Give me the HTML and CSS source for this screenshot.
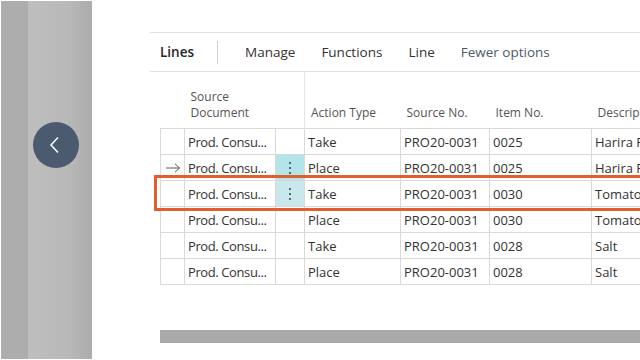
FILE: index.html
```html
<!DOCTYPE html>
<html>
    <head>
        <title>Lines</title>
        <link rel="stylesheet" href="styles.css">
    </head>
    <body>
        <!-- Collapsed side panel -->
        <div class="strip">
            <div class="strip-dark"></div>
            <div class="strip-light">
                <div class="back-btn">
                    <svg width="12" height="18" viewBox="0 0 12 18">
                        <polyline points="9,1.5 2,9 9,16.5" fill="none" stroke="#ffffff" stroke-width="1.5"/>
                    </svg>
                </div>
            </div>
        </div>

        <!-- Lines part -->
        <div class="main">
            <div class="toolbar">
                <span class="tab-title">Lines</span>
                <span class="sep"></span>
                <span class="action">Manage</span>
                <span class="action">Functions</span>
                <span class="action">Line</span>
                <span class="action muted">Fewer options</span>
            </div>

            <div class="grid-wrap">
                <table class="lines">
                    <colgroup>
                        <col class="c-ind"><col class="c-doc"><col class="c-dots"><col class="c-act">
                        <col class="c-src"><col class="c-item"><col class="c-desc">
                    </colgroup>
                    <thead>
                        <tr>
                            <th></th>
                            <th class="two">Source<br>Document</th>
                            <th class="frozen"></th>
                            <th>Action Type</th>
                            <th>Source No.</th>
                            <th>Item No.</th>
                            <th>Description</th>
                        </tr>
                    </thead>
                    <tbody>
                        <tr>
                            <td></td><td class="doc">Prod. Consu...</td><td></td><td>Take</td>
                            <td>PRO20-0031</td><td>0025</td><td>Harira Paste</td>
                        </tr>
                        <tr>
                            <td class="ind"><svg width="16" height="10" viewBox="0 0 16 10"><path d="M1 5 H14.5 M10 0.8 L14.5 5 L10 9.2" fill="none" stroke="#555" stroke-width="1"/></svg></td>
                            <td class="doc">Prod. Consu...</td>
                            <td class="dots on"><svg width="4" height="14" viewBox="0 0 4 14"><circle cx="2" cy="2" r="1" fill="#3a3a3a"/><circle cx="2" cy="7" r="1" fill="#3a3a3a"/><circle cx="2" cy="12" r="1" fill="#3a3a3a"/></svg></td>
                            <td>Place</td><td>PRO20-0031</td><td>0025</td><td>Harira Paste</td>
                        </tr>
                        <tr>
                            <td></td><td class="doc">Prod. Consu...</td>
                            <td class="dots soft"><svg width="4" height="14" viewBox="0 0 4 14"><circle cx="2" cy="2" r="1" fill="#3a3a3a"/><circle cx="2" cy="7" r="1" fill="#3a3a3a"/><circle cx="2" cy="12" r="1" fill="#3a3a3a"/></svg></td>
                            <td>Take</td><td>PRO20-0031</td><td>0030</td><td>Tomato Paste</td>
                        </tr>
                        <tr>
                            <td></td><td class="doc">Prod. Consu...</td><td></td><td>Place</td>
                            <td>PRO20-0031</td><td>0030</td><td>Tomato Paste</td>
                        </tr>
                        <tr>
                            <td></td><td class="doc">Prod. Consu...</td><td></td><td>Take</td>
                            <td>PRO20-0031</td><td>0028</td><td>Salt</td>
                        </tr>
                        <tr>
                            <td></td><td class="doc">Prod. Consu...</td><td></td><td>Place</td>
                            <td>PRO20-0031</td><td>0028</td><td>Salt</td>
                        </tr>
                    </tbody>
                </table>
                <div class="highlight"></div>
            </div>

            <div class="hscroll"></div>
        </div>
    </body>
</html>
```

FILE: styles.css
```css
html, body {
    margin: 0;
    height: 100%;
    overflow: hidden;
}
body {
    display: flex;
    background-color: #ffffff;
    font-family: "Open Sans", "Noto Sans", sans-serif;
    color: #333333;
}
.strip {
    display: flex;
    width: 91px;
    flex-shrink: 0;
    margin: 1px 0 1px 1px;
}
.strip-dark {
    width: 27px;
    background-color: #adadad;
}
.strip-light {
    flex: 1;
    background: linear-gradient(to right, #bebebe, #b9b9b9 60%, #acacac);
    position: relative;
}
.back-btn {
    position: absolute;
    left: 5px;
    top: 121px;
    width: 46px;
    height: 46px;
    border-radius: 50%;
    background-color: #4b5a6f;
    display: flex;
    align-items: center;
    justify-content: center;
}
.back-btn svg {
    margin-left: -2px;
}
.main {
    flex: 1;
    padding-top: 32px;
    min-width: 0;
}
.toolbar {
    margin-left: 58px;
    padding-left: 10px;
    height: 38px;
    border-top: 1px solid #e2e2e2;
    border-bottom: 1px solid #e2e2e2;
    display: flex;
    align-items: center;
    font-size: 14px;
    white-space: nowrap;
}
.tab-title {
    font-weight: 600;
    font-size: 13.5px;
    color: #262626;
}
.sep {
    width: 1px;
    height: 23px;
    background-color: #cfcfcf;
    margin-left: 23px;
    margin-right: 27px;
}
.action {
    margin-right: 26px;
    font-size: 13.5px;
    color: #333333;
}
.muted {
    color: #505a66;
}
.grid-wrap {
    position: relative;
    margin-left: 68px;
}
.lines {
    border-collapse: collapse;
    table-layout: fixed;
    width: 631px;
    font-size: 13px;
}
.c-ind { width: 24px; }
.c-doc { width: 91px; }
.c-dots { width: 29px; }
.c-act { width: 96px; }
.c-src { width: 89px; }
.c-item { width: 102px; }
.c-desc { width: 200px; }
.lines th {
    height: 49px;
    padding: 0 0 7px 6px;
    vertical-align: bottom;
    text-align: left;
    font-weight: normal;
    font-size: 12px;
    line-height: 16px;
    color: #555555;
    white-space: nowrap;
    overflow: hidden;
}
.lines th.frozen {
    border-right: 1px solid #e4e4e4;
}
.lines td {
    height: 25px;
    padding: 0 0 0 3px;
    border: 1px solid #d9d9d9;
    white-space: nowrap;
    overflow: hidden;
    color: #333333;
}
.lines td.doc {
    letter-spacing: -0.4px;
    overflow: visible;
}
.lines td.ind {
    padding: 0 0 0 4px;
}
.lines td.ind svg {
    display: block;
}
.lines td.dots {
    text-align: center;
    padding: 0;
}
.lines td.dots svg {
    display: block;
    margin: 0 auto;
}
.lines td.on {
    background-color: #b3e4ea;
}
.lines td.soft {
    background-color: #c9e8ed;
}
.highlight {
    position: absolute;
    left: -6px;
    top: 103px;
    width: 600px;
    height: 30px;
    border: 3px solid #e05f2c;
}
.hscroll {
    margin-left: 68px;
    margin-top: 45px;
    height: 13px;
    background-color: #a9a9a9;
}
```
